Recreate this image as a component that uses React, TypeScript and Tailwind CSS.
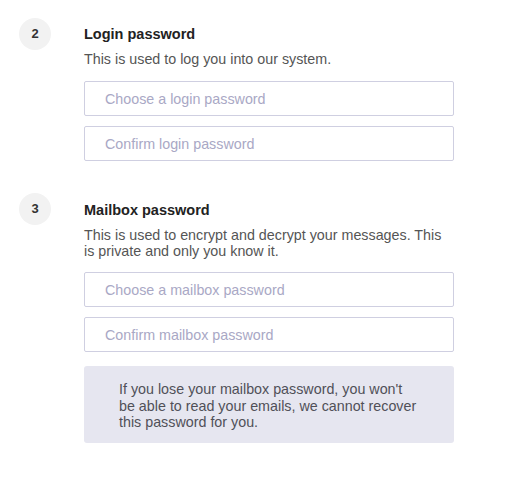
const font = { fontFamily: '"Liberation Sans", Arial, sans-serif' };

function StepBadge({ n }: { n: number }) {
  return (
    <div className="flex h-8 w-8 shrink-0 items-center justify-center rounded-full bg-[#f2f2f2] text-[13px] font-bold text-[#333]">
      {n}
    </div>
  );
}

function PasswordInput({ placeholder }: { placeholder: string }) {
  return (
    <input
      type="password"
      placeholder={placeholder}
      className="block h-[35px] w-full rounded-[2px] border border-[#cfcfe1] bg-white pl-5 text-[14.3px] text-[#333] outline-none placeholder:text-[#a9a8c5]"
    />
  );
}

export default function App() {
  return (
    <div className="min-h-screen bg-white pl-[19px] pt-[18px]" style={font}>
      {/* Step 2 */}
      <div className="flex gap-[33px]">
        <StepBadge n={2} />
        <div className="w-[370px] pt-[6px]">
          <h2 className="text-[14.5px] font-bold leading-5 text-[#222]">Login password</h2>
          <p className="mt-[7px] text-[14.3px] leading-4 text-[#555]">
            This is used to log you into our system.
          </p>
          <div className="mt-[14px] flex flex-col gap-[10px]">
            <PasswordInput placeholder="Choose a login password" />
            <PasswordInput placeholder="Confirm login password" />
          </div>
        </div>
      </div>

      {/* Step 3 */}
      <div className="mt-[32px] flex gap-[33px]">
        <StepBadge n={3} />
        <div className="w-[370px] pt-[7px]">
          <h2 className="text-[14.5px] font-bold leading-5 text-[#222]">Mailbox password</h2>
          <p className="mt-[7px] text-[14.3px] leading-4 text-[#555]">
            This is used to encrypt and decrypt your messages. This is private and only you know
            it.
          </p>
          <div className="mt-[13px] flex flex-col gap-[10px]">
            <PasswordInput placeholder="Choose a mailbox password" />
            <PasswordInput placeholder="Confirm mailbox password" />
          </div>
          <div className="mt-[14px] h-[77px] rounded-[3px] bg-[#e6e6f0] px-[35px] pt-[15px]">
            <p className="text-[14.3px] leading-[16.5px] text-[#505058]">
              If you lose your mailbox password, you won't be able to read your emails, we cannot
              recover this password for you.
            </p>
          </div>
        </div>
      </div>
    </div>
  );
}
